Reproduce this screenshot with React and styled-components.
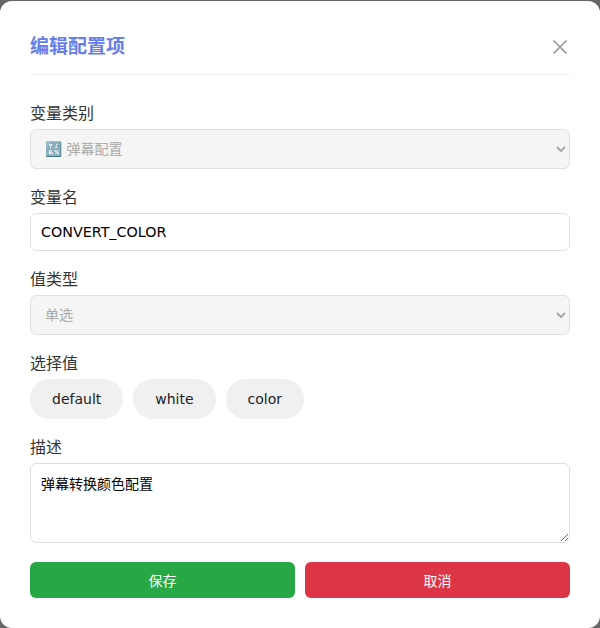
import React from "react";
import styled, { createGlobalStyle } from "styled-components";

const Global = createGlobalStyle`
  html, body { margin: 0; padding: 0; height: 100%; }
  body { background: #666; font-family: "DejaVu Sans", "Noto Sans CJK SC", sans-serif; overflow: hidden; }
  * { box-sizing: border-box; }
`;
const Backdrop = styled.div`
  width: 600px; height: 628px; padding-top: 1px; background: #666;
`;
const Modal = styled.div`
  width: 600px; height: 627px; background: #fff; border-radius: 12px; padding: 30px;
`;
const Header = styled.div`
  display: flex; justify-content: space-between; align-items: center;
  padding-bottom: 14px; padding-top: 2px; margin-bottom: 29px; border-bottom: 1px solid #eee;
  box-sizing: content-box; height: 27px;
`;
const Title = styled.h3`
  margin: 0; font-size: 19px; line-height: 27px; font-weight: 700; color: #667eea;
`;
const Close = styled.button`
  border: 0; background: none; padding: 0; width: 20px; height: 20px; color: #999; display: flex; align-items: center; justify-content: center;
`;
const Group = styled.div`
  margin-bottom: 19px;
`;
const Label = styled.label`
  display: block; font-size: 16px; line-height: 19px; margin-bottom: 6px; color: #333;
`;
const Select = styled.select`
  display: block; width: 100%; height: 40px; padding: 0 10px; font: inherit; font-size: 14px;
  border: 1px solid #e0e0e0; border-radius: 6px; background-color: #f5f5f5; color: #aaa; opacity: 1;
`;
const Input = styled.input`
  display: block; width: 100%; height: 38px; padding: 0 10px; font: inherit; font-size: 14.3px;
  border: 1px solid #ddd; border-radius: 6px; color: #000; background: #fff;
`;
const Pills = styled.div`
  display: flex; gap: 10px;
`;
const Pill = styled.button`
  height: 40px; padding: 0 22px; border: 0; border-radius: 20px; background: #f0f0f0; color: #222;
  font: inherit; font-size: 14px;
`;
const Area = styled.textarea`
  display: block; width: 100%; height: 80px; padding: 9px 10px; font: inherit; font-size: 14px;
  border: 1px solid #ddd; border-radius: 6px; color: #000; resize: vertical;
`;
const Actions = styled.div`
  display: flex; gap: 10px; margin-top: 19px;
`;
const Action = styled.button`
  flex: 1; height: 36px; border: 0; border-radius: 6px; color: #fff; font: inherit; font-size: 14px;
  background: ${(p) => p.$bg};
`;

export default function App() {
  return (
    <Backdrop>
      <Global />
      <Modal>
        <Header>
          <Title>编辑配置项</Title>
          <Close aria-label="close">
            <svg width="16" height="16" viewBox="0 0 16 16" fill="none" stroke="currentColor" strokeWidth="1.7">
              <path d="M1.5 1.5 14.5 14.5M14.5 1.5 1.5 14.5" />
            </svg>
          </Close>
        </Header>
        <Group>
          <Label>变量类别</Label>
          <Select disabled defaultValue="a"><option value="a">🔣 弹幕配置</option></Select>
        </Group>
        <Group>
          <Label>变量名</Label>
          <Input defaultValue="CONVERT_COLOR" />
        </Group>
        <Group>
          <Label>值类型</Label>
          <Select disabled defaultValue="a"><option value="a">单选</option></Select>
        </Group>
        <Group>
          <Label>选择值</Label>
          <Pills>
            <Pill>default</Pill>
            <Pill>white</Pill>
            <Pill>color</Pill>
          </Pills>
        </Group>
        <Group>
          <Label>描述</Label>
          <Area defaultValue="弹幕转换颜色配置" />
        </Group>
        <Actions>
          <Action $bg="#28a745">保存</Action>
          <Action $bg="#dc3545">取消</Action>
        </Actions>
      </Modal>
    </Backdrop>
  );
}
